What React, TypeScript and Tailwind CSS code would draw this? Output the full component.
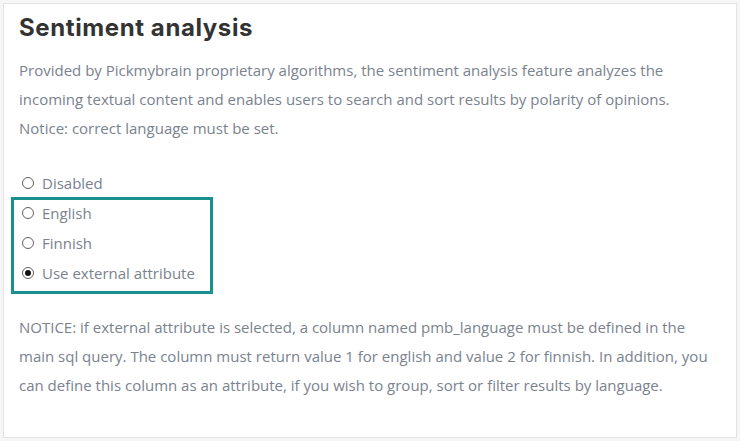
import React from "react";

const options = [
  { id: "disabled", label: "Disabled" },
  { id: "english", label: "English" },
  { id: "finnish", label: "Finnish" },
  { id: "external", label: "Use external attribute" },
];

export default function App() {
  const [value, setValue] = React.useState("external");

  return (
    <div className="w-[740px] h-[441px] bg-[#f6f6f6] p-[3px] font-['Open_Sans',sans-serif]">
      <div className="h-full border border-[#e3e3e3] bg-white pl-[15px] pr-4 pt-[9px]">
        <h2 className="text-[24px] leading-[30px] font-bold text-[#333333] tracking-[0.6px] font-['Inter',sans-serif]">
          Sentiment analysis
        </h2>
        <p className="mt-[13px] text-[15px] leading-[29px] text-[#7a828e]">
          Provided by Pickmybrain proprietary algorithms, the sentiment analysis feature analyzes the
          <br />
          incoming textual content and enables users to search and sort results by polarity of opinions.
          <br />
          Notice: correct language must be set.
        </p>

        <div className="relative mt-[25px]">
          {options.map((o) => (
            <label key={o.id} className="flex h-[30px] items-center gap-[8px] text-[15px] text-[#7a828e]">
              <span className="ml-[3px] flex h-[12px] w-[12px] items-center justify-center rounded-full border border-[#5f5f5f] bg-white">
                {value === o.id ? <span className="h-[6px] w-[6px] rounded-full bg-[#111]" /> : null}
              </span>
              <input
                type="radio"
                name="sentiment"
                className="sr-only"
                checked={value === o.id}
                onChange={() => setValue(o.id)}
              />
              {o.label}
            </label>
          ))}
          <div className="pointer-events-none absolute left-[-8px] top-[29px] h-[97px] w-[202px] border-[3px] border-[#17908f]" />
        </div>

        <p className="mt-[25px] text-[15px] leading-[29px] text-[#7a828e]">
          NOTICE: if external attribute is selected, a column named pmb_language must be defined in the
          <br />
          main sql query. The column must return value 1 for english and value 2 for finnish. In addition, you
          <br />
          can define this column as an attribute, if you wish to group, sort or filter results by language.
        </p>
      </div>
    </div>
  );
}
